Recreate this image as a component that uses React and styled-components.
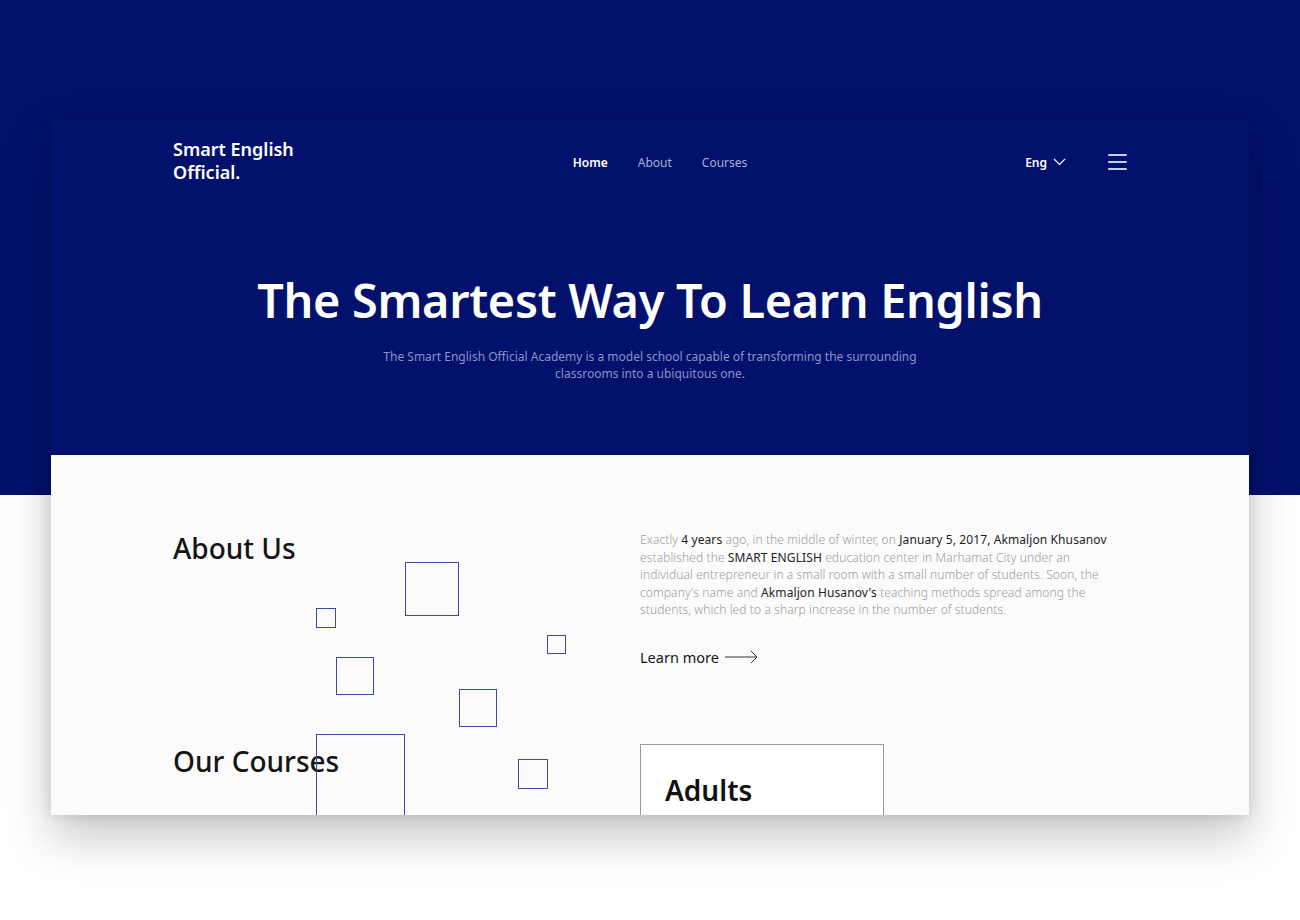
import React from "react"
import styled, { createGlobalStyle } from "styled-components"

const NAVY = "#02116b"
const FONT = `"Noto Sans", "Open Sans", sans-serif`

const GlobalStyle = createGlobalStyle`
  html, body {
    margin: 0;
    padding: 0;
  }
  body {
    font-family: ${FONT};
    background: #fff;
  }
`

const Stage = styled.div`
  width: 1300px;
  height: 920px;
  overflow: hidden;
  background: linear-gradient(to bottom, ${NAVY} 0, ${NAVY} 495px, #ffffff 495px);
  padding: 120px 51px 0;
  box-sizing: border-box;
`

const Frame = styled.div`
  width: 1198px;
  height: 695px;
  overflow: hidden;
  background: #fbfbfb;
  box-shadow: 0 22px 45px rgba(0, 0, 0, 0.22), 0 0 14px rgba(0, 0, 0, 0.12);
`

const Hero = styled.section`
  background: ${NAVY};
  height: 335px;
  padding: 0 122px;
  box-sizing: border-box;
  color: #fff;
`

const Header = styled.header`
  height: 82px;
  display: grid;
  grid-template-columns: 1fr auto 1fr;
  align-items: center;
`

const Logo = styled.div`
  font-size: 18px;
  font-weight: 600;
  line-height: 23px;
`

const Nav = styled.nav`
  display: flex;
  gap: 30px;
  font-size: 12px;
  padding-top: 2px;
  margin-left: 20px;
`

const NavLink = styled.a`
  color: ${p => (p.$active ? "#ffffff" : "#a9aed6")};
  font-weight: ${p => (p.$active ? 600 : 400)};
  text-decoration: none;
`

const Tools = styled.div`
  display: flex;
  justify-content: flex-end;
  align-items: center;
  gap: 42px;
  padding-top: 2px;
`

const Lang = styled.div`
  display: flex;
  align-items: center;
  gap: 6px;
  font-size: 12px;
  font-weight: 600;
  color: #fff;
`

const Burger = styled.div`
  display: flex;
  flex-direction: column;
  gap: 5px;
  width: 19px;

  span {
    height: 2px;
    background: #c9cce6;
    border-radius: 1px;
  }
`

const HeroBody = styled.div`
  text-align: center;
  padding-top: 70px;
`

const Title = styled.h1`
  margin: 0;
  font-size: 46.8px;
  font-weight: 600;
  line-height: 56px;
  letter-spacing: -0.3px;
`

const Lead = styled.p`
  margin: 20px auto 0;
  width: 560px;
  font-size: 12px;
  line-height: 17px;
  color: #8c92c6;
`

const Content = styled.section`
  position: relative;
  padding: 76px 122px 0;
  display: grid;
  grid-template-columns: 467px 472px;
  grid-template-rows: 213px auto;
`

const Heading = styled.h2`
  margin: 0;
  font-size: 28px;
  font-weight: 500;
  color: #151515;
  line-height: 34px;
`

const Text = styled.p`
  margin: 0;
  font-size: 12px;
  line-height: 17.5px;
  letter-spacing: 0.1px;
  color: #9c9c9c;
  font-weight: 300;

  b {
    font-weight: 400;
    color: #1e1e1e;
  }
`

const More = styled.a`
  display: inline-flex;
  align-items: center;
  gap: 6px;
  margin-top: 28px;
  font-size: 14.5px;
  color: #151515;
  text-decoration: none;
`

const CourseCard = styled.div`
  width: 244px;
  height: 120px;
  box-sizing: border-box;
  border: 1px solid #9a9a9a;
  background: #fff;
  padding: 26px 24px;
`

const CardTitle = styled.h3`
  margin: 0;
  font-size: 28px;
  font-weight: 600;
  color: #111;
`

const Square = styled.span`
  position: absolute;
  box-sizing: border-box;
  border: 1.5px solid #3f4aa4;
  width: ${p => p.$s}px;
  height: ${p => p.$s}px;
  left: ${p => p.$x}px;
  top: ${p => p.$y}px;
`

const squares = [
  { x: 354, y: 107, s: 54 },
  { x: 265, y: 153, s: 20 },
  { x: 496, y: 180, s: 19 },
  { x: 285, y: 202, s: 38 },
  { x: 408, y: 234, s: 38 },
  { x: 265, y: 279, s: 89 },
  { x: 467, y: 304, s: 30 },
]

export default function App() {
  return (
    <>
      <GlobalStyle />
      <Stage>
        <Frame>
          <Hero>
            <Header>
              <Logo>
                Smart English
                <br />
                Official.
              </Logo>
              <Nav>
                <NavLink href="#!" $active>Home</NavLink>
                <NavLink href="#!">About</NavLink>
                <NavLink href="#!">Courses</NavLink>
              </Nav>
              <Tools>
                <Lang>
                  Eng
                  <svg width="13" height="8" viewBox="0 0 13 8" fill="none">
                    <path d="M1 1l5.5 5.5L12 1" stroke="#fff" strokeWidth="1.2" />
                  </svg>
                </Lang>
                <Burger>
                  <span />
                  <span />
                  <span />
                </Burger>
              </Tools>
            </Header>
            <HeroBody>
              <Title>The Smartest Way To Learn English</Title>
              <Lead>
                The Smart English Official Academy is a model school capable of transforming the surrounding
                classrooms into a ubiquitous one.
              </Lead>
            </HeroBody>
          </Hero>
          <Content>
            <Heading>About Us</Heading>
            <div>
              <Text>
                Exactly <b>4 years</b> ago, in the middle of winter, on <b>January 5, 2017, Akmaljon Khusanov</b>{" "}
                established the <b>SMART ENGLISH</b> education center in Marhamat City under an individual
                entrepreneur in a small room with a small number of students. Soon, the company's name and{" "}
                <b>Akmaljon Husanov's</b> teaching methods spread among the students, which led to a sharp
                increase in the number of students.
              </Text>
              <More href="#!">
                Learn more
                <svg width="34" height="14" viewBox="0 0 34 14" fill="none">
                  <path d="M0 7h32M26 1l6 6-6 6" stroke="#333" strokeWidth="1" />
                </svg>
              </More>
            </div>
            <Heading>Our Courses</Heading>
            <CourseCard>
              <CardTitle>Adults</CardTitle>
            </CourseCard>
            {squares.map((q, i) => (
              <Square key={i} $x={q.x} $y={q.y} $s={q.s} />
            ))}
          </Content>
        </Frame>
      </Stage>
    </>
  )
}
